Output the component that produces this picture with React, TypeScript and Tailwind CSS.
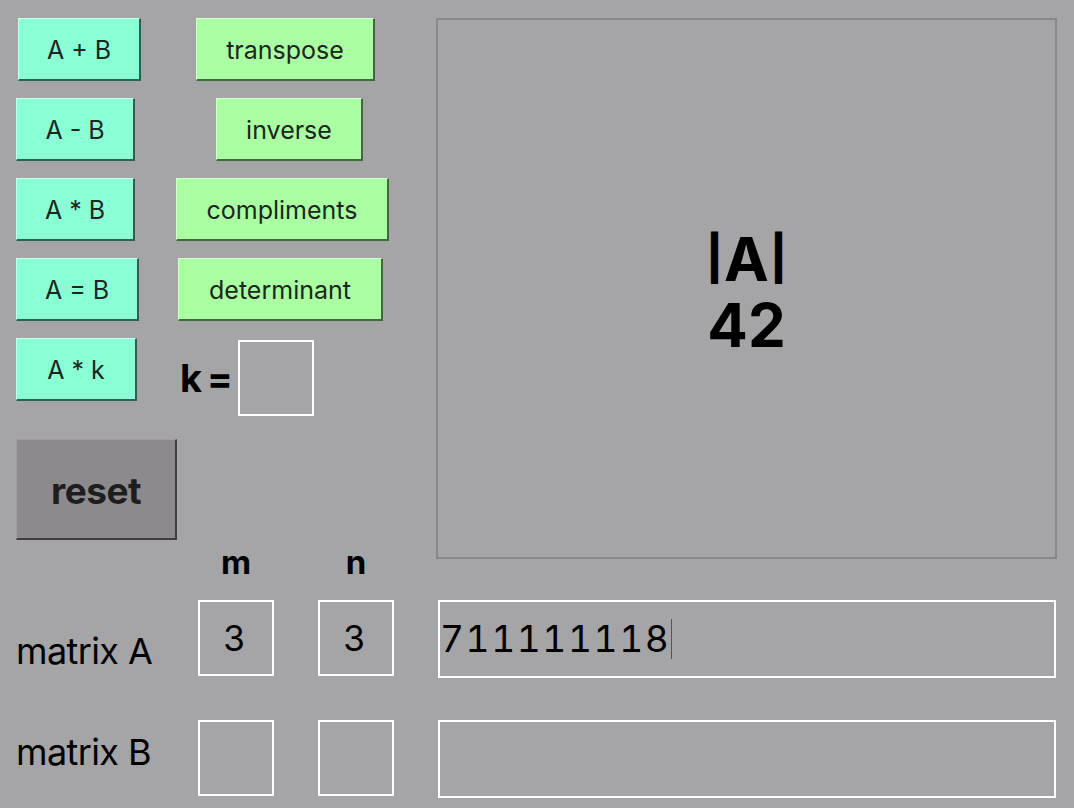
import React from "react";

const font = { fontFamily: 'Inter, "Liberation Sans", Arial, sans-serif' };

const base =
  "h-[63px] flex items-center justify-center pt-[3px] text-[25px] text-[#1c2620] border-t border-l border-r-2 border-b-2 shrink-0";
const teal =
  base + " bg-[#8affd6] border-t-[#c4fff0] border-l-[#c4fff0] border-r-[#2f5f50] border-b-[#2f5f50]";
const green =
  base + " bg-[#a9ffa1] border-t-[#d4ffd0] border-l-[#d4ffd0] border-r-[#3f6a3a] border-b-[#3f6a3a]";

export default function App() {
  return (
    <div
      className="w-[1074px] h-[808px] bg-[#a5a5a7] overflow-hidden text-black"
      style={font}
    >
      <div className="flex items-start pt-[18px] pl-[16px]">
        {/* left panel */}
        <div className="w-[420px] shrink-0 flex flex-col">
          <div className="flex h-[63px]">
            <div className="w-[160px] shrink-0">
              <button className={teal + " w-[123px] ml-[2px]"}>A + B</button>
            </div>
            <button className={green + " w-[179px] ml-[20px]"}>transpose</button>
          </div>
          <div className="flex h-[63px] mt-[17px]">
            <div className="w-[160px] shrink-0">
              <button className={teal + " w-[119px]"}>A - B</button>
            </div>
            <button className={green + " w-[147px] ml-[40px]"}>inverse</button>
          </div>
          <div className="flex h-[63px] mt-[17px]">
            <div className="w-[160px] shrink-0">
              <button className={teal + " w-[119px]"}>A * B</button>
            </div>
            <button className={green + " w-[213px]"}>compliments</button>
          </div>
          <div className="flex h-[63px] mt-[17px]">
            <div className="w-[160px] shrink-0">
              <button className={teal + " w-[123px]"}>A = B</button>
            </div>
            <button className={green + " w-[205px] ml-[2px]"}>determinant</button>
          </div>
          <div className="flex mt-[17px] items-start">
            <div className="w-[160px] shrink-0">
              <button className={teal + " w-[121px]"}>A * k</button>
            </div>
            <div className="flex items-center ml-[4px] mt-[2px]">
              <span className="text-[38px] font-bold leading-none">k</span>
              <span className="text-[38px] font-bold leading-none ml-[5px]">=</span>
              <div className="w-[76px] h-[76px] border-2 border-white ml-[5px]" />
            </div>
          </div>
          <button className="mt-[23px] w-[161px] h-[101px] bg-[#8c8a8d] border-t border-l border-t-[#a09ea1] border-l-[#a09ea1] border-r-2 border-b-2 border-r-[#3e3d3f] border-b-[#3e3d3f] flex items-center justify-center pt-[4px] text-[37px] font-bold text-[#1e1e1e] tracking-[-0.5px]">
            reset
          </button>
          <div className="flex h-[44px] items-center">
            <div className="w-[182px] shrink-0" />
            <div className="w-[76px] text-center text-[33px] font-bold leading-none">m</div>
            <div className="w-[44px]" />
            <div className="w-[76px] text-center text-[33px] font-bold leading-none">n</div>
          </div>
        </div>
        {/* display */}
        <div className="w-[621px] h-[541px] border-2 border-[#888888] flex flex-col items-center justify-center font-bold text-[60px] leading-[66px] shrink-0 pt-[6px]">
          <div>
            <span className="text-[44px] font-extrabold align-[7px]">|</span>
            <span className="mx-[1px]">A</span>
            <span className="text-[44px] font-extrabold align-[7px]">|</span>
          </div>
          <div>42</div>
        </div>
      </div>

      {/* matrix rows */}
      <div className="flex flex-col pl-[16px] mt-[16px]">
        <div className="flex items-start h-[78px]">
          <div className="w-[182px] shrink-0 text-[36px] pt-[33px] leading-none tracking-[-0.6px]">matrix A</div>
          <div className="w-[76px] h-[76px] border-2 border-white flex items-center justify-center text-[35px] pr-[4px]">3</div>
          <div className="w-[76px] h-[76px] border-2 border-white flex items-center justify-center text-[35px] ml-[44px] pr-[4px]">3</div>
          <div className="w-[618px] h-[78px] border-2 border-white ml-[44px] flex items-center text-[37px] tracking-[1.6px] tabular-nums">
            <span>711111118</span>
            <span className="inline-block w-px h-[40px] bg-[#555] ml-[1px]" />
          </div>
        </div>
        <div className="flex items-start h-[76px] mt-[42px]">
          <div className="w-[182px] shrink-0 text-[36px] pt-[14px] leading-none tracking-[-0.6px]">matrix B</div>
          <div className="w-[76px] h-[76px] border-2 border-white" />
          <div className="w-[76px] h-[76px] border-2 border-white ml-[44px]" />
          <div className="w-[618px] h-[78px] border-2 border-white ml-[44px]" />
        </div>
      </div>
    </div>
  );
}
